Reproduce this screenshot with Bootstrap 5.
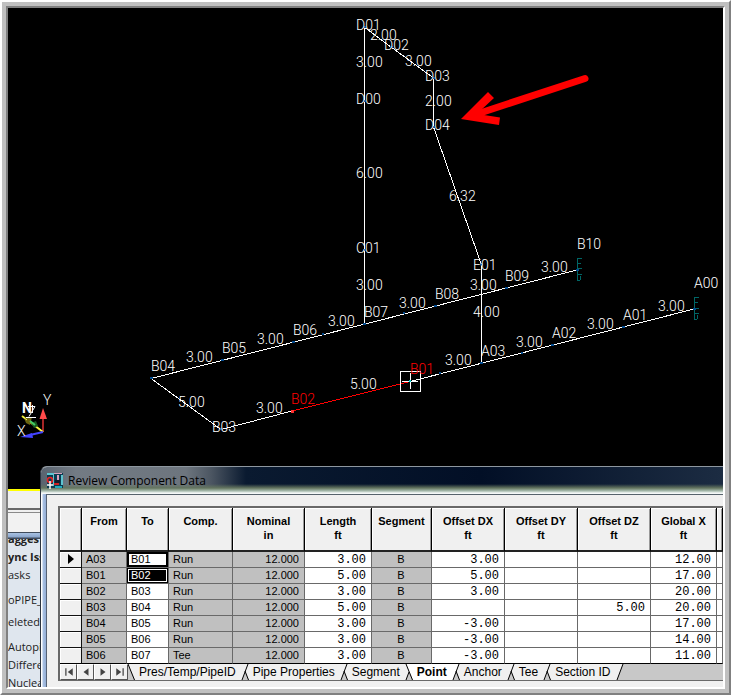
<!DOCTYPE html>
<html lang="en">
<head>
<meta charset="utf-8">
<meta name="viewport" content="width=device-width, initial-scale=1">
<title>Review Component Data</title>
<link href="https://cdn.jsdelivr.net/npm/bootstrap@5.3.0/dist/css/bootstrap.min.css" rel="stylesheet">
<style>
body{font-family:"Liberation Sans",Arial,sans-serif;color:#000;background:#fff}
.bevel-outer{border:2px solid #fff;border-right-color:#808080;border-bottom-color:#808080}
.bevel-mid{border:4px solid #c0c0c0}
.bevel-inner{border:2px solid #808080;border-right-color:#fff;border-bottom-color:#fff}
.scene{background:#000;font-size:14px;font-family:Roboto,"Liberation Sans",sans-serif;font-weight:300}
.scene text{fill:#fff}
.scene .hot{fill:#f00}
.mail{width:34px;font-family:"Open Sans","Noto Sans",sans-serif;font-size:11px;line-height:18px;color:#222;background:#dfe6ee;border-top:2px solid #ff0}
.strip-a{height:17px;background:#f0f0f0}
.strip-b{height:24px;background:#f2f2f2;border-top:2px solid #696969;box-shadow:inset 0 2px #f0f0f0,inset 0 3px #8a8a8a}
.strip-c{height:7px;background:linear-gradient(#404c5c 1px,#a9c2e2 1px,#8ba6cd 5px,#404c5c 6px)}
.mail-cut{height:9px}
.gap-top{margin-top:7px}
.dialog-win{left:32px;background:#f0f0f0;border:1px solid #8e979f;border-left-color:#2c3440;border-right:0;border-bottom:0;border-top-left-radius:7px}
.title-strip{height:27px;background:linear-gradient(to bottom,transparent 17px,#64755f 21px,#a9bdb0 24px,#f4f8f8 26px),linear-gradient(to right,#59636f,#737b84 35px,#6d757e 145px,#4c5662 170px,#0a1a30 205px,#020f26 440px,#1c2c42)}
.title-name{font-family:"Open Sans","Noto Sans",sans-serif;font-size:12px;line-height:27px}
.glass{width:6px;background:linear-gradient(to right,#fff 1px,#a9c1e3 2px,#94aed6 5px,#566274 5px)}
.client{border-top:1px solid #56636c;padding:11px 0 0 11px}
.grid-box{border-left:2px solid #696969;border-top:2px solid #696969}
.grid-sheet{table-layout:fixed;border-collapse:separate;border-spacing:0;font-size:11px;line-height:14px}
.grid-sheet thead th{height:44px;padding:6px 0 0;vertical-align:top;text-align:center;background:#f0f0f0;border-right:1px solid #000;border-bottom:2px solid #222;box-shadow:inset 1px 1px #fff,inset -1px 0 #999}
.grid-sheet td,.grid-sheet tbody th{height:16px;line-height:15px;padding:0 5px 0 4px;border-right:1px solid #696969;border-bottom:1px solid #696969;overflow:hidden;white-space:nowrap;background:#fff}
.grid-sheet tbody th{background:#f0f0f0;padding:0;text-align:center;border-color:#111;box-shadow:inset 1px 1px #fff}
.grid-sheet tbody th svg{margin-top:-2px}
.grid-sheet tbody tr:last-child>*{border-bottom-color:#000}
.grid-sheet .lock{background:#c0c0c0}
.grid-sheet .num{font-family:"Liberation Mono","Courier New",monospace;font-size:12px;text-align:right;padding-top:2px;line-height:13px}
.grid-sheet .current{box-shadow:inset 0 0 0 2px #000}
.grid-sheet .picked{background:#000;color:#fff;box-shadow:inset 0 0 0 1px #000,inset 0 0 0 2px #fff}
.sheet-tabs{height:17px;background:#c8c8c8;border-bottom:1px solid #696969;font-size:12px;line-height:15px}
.sheet-tabs button{border:0;background:#f0f0f0;color:#000;padding:0 5px 0 4px;white-space:nowrap}
.sheet-tabs .step{width:17px;padding:0;border:1px solid #fff;border-right-color:#555;border-bottom-color:#555;line-height:0}
.sheet-tabs .on{background:#fff}
.foot{height:6px}
</style>
<script src="https://cdn.jsdelivr.net/npm/bootstrap@5.3.0/dist/js/bootstrap.bundle.min.js"></script>
</head>
<body>
<div class="bevel-outer vh-100 d-flex"><div class="bevel-mid flex-grow-1 d-flex"><main class="bevel-inner flex-grow-1 d-flex flex-column position-relative overflow-hidden">

<svg class="scene d-block w-100 flex-shrink-0" viewBox="8 8 715 481" role="img" aria-label="Pipe model">
  <g fill="none" stroke="#fff" stroke-width="1" shape-rendering="crispEdges">
    <path d="M364.500 27V324M364 27L391 47L433.500 78V127L481.500 265V363"/>
    <path d="M577 270L151 378.500L221 429.500L292 411M410 381.500L694 309"/>
    <path stroke="#f00" d="M292 411L410 381.500"/>
  </g>
  <g fill="none" stroke="#006666" shape-rendering="crispEdges">
    <path d="M577.500 259V281M577 258.500h5M578 263.500h3M578 268.500h4M578 274.500h4M577 280.500h3M580.500 276v4"/>
    <path d="M694.500 298V320M694 297.500h5M695 302.500h3M695 308.500h4M695 313.500h4M694 319.500h3M697.500 315v4"/>
  </g>
  <path fill="none" stroke="#004a90" stroke-width="2" d="M363 27h3M390 47h3M432 78h3M363 101h3M432 127h3M363 250h3M480 264.500h3M505 288h3M576 270h3M434 306h3M403 313h2M363 324h3M322 334h2M292 342h3M221 360h3M150 378h3M220 429h3M480 363h3M439 373h2M521 353h2M551 345h3M622 327h3M693 309h3"/>
  <g fill="none" stroke="#fff" shape-rendering="crispEdges"><path d="M400.500 371.500h20v20h-20zM410.500 373v16M402 381.500h16"/></g>
  <path fill="#0cc" d="M409 380h2v2h-2z"/><path fill="#f33" d="M291 410h3v3h-3z"/>
  <g>
    <text x="356" y="30">D01</text><text x="370" y="40">2.00</text><text x="384" y="50">D02</text>
    <text x="405" y="66">3.00</text><text x="425" y="81">D03</text><text x="356" y="67">3.00</text>
    <text x="356" y="104">D00</text><text x="425" y="106">2.00</text><text x="425" y="130">D04</text>
    <text x="356" y="178">6.00</text><text x="449" y="201">6.32</text><text x="356" y="253">C01</text>
    <text x="473" y="270">E01</text><text x="356" y="290">3.00</text><text x="470" y="290">3.00</text>
    <text x="505" y="281">B09</text><text x="541" y="272">3.00</text><text x="577" y="249">B10</text>
    <text x="435" y="299">B08</text><text x="399" y="308">3.00</text><text x="473" y="317">4.00</text>
    <text x="364" y="317">B07</text><text x="694" y="288">A00</text><text x="658" y="311">3.00</text>
    <text x="623" y="320">A01</text><text x="587" y="329">3.00</text><text x="552" y="338">A02</text>
    <text x="516" y="347">3.00</text><text x="481" y="356">A03</text><text x="445" y="365">3.00</text>
    <text x="410" y="374" class="hot">B01</text><text x="151" y="371">B04</text><text x="186" y="362">3.00</text>
    <text x="222" y="353">B05</text><text x="257" y="344">3.00</text><text x="293" y="335">B06</text>
    <text x="328" y="326">3.00</text><text x="178" y="407">5.00</text><text x="212" y="432">B03</text>
    <text x="256" y="413">3.00</text><text x="291" y="404" class="hot">B02</text><text x="350" y="389">5.00</text>
  </g>
  <path stroke="#f00" stroke-width="7" stroke-linecap="round" d="M480 113L585 78.500"/>
  <path fill="#f00" d="M461 119L488 92L494 98L480 111L484 115L500 117.500L499 125Z"/>
  <g>
    <path stroke="#d33" stroke-width="1.500" d="M43 418V432"/><path fill="#ff4a4a" d="M43 408L47 419H39.500Z"/>
    <path stroke="#ee3" stroke-width="2" d="M22 416L43 432"/>
    <path fill="#6b6410" d="M24 418L32 417L30 425L26 423Z"/><path fill="#185c20" d="M31 423L36 421L38 426L34 428Z"/>
    <path stroke="#ff5" d="M23 417L27 420M37 427L42 431"/><path stroke="#4c6" stroke-width="2" d="M30 421L35 425"/>
    <path stroke="#44f" stroke-width="2" d="M30 435L43 432"/><path fill="#44f" d="M20 437L32 433L33 438Z"/>
    <text class="fw-bold" x="22" y="413">N</text>
    <path fill="none" stroke="#fff" d="M28 406.500h7L29 416.500M26 417.500h10M32.500 405v8"/>
    <text x="43" y="405">Y</text><text x="17" y="436">X</text>
  </g>
</svg>

<div class="mail flex-grow-1 overflow-hidden text-nowrap">
  <div class="strip-a"></div><div class="strip-b"></div><div class="strip-c"></div>
  <div class="mail-cut d-flex align-items-end overflow-hidden fw-bold">agges</div>
  <div class="fw-bold">ync Iss</div>
  <div>asks</div>
  <div class="gap-top">oPIPE_</div>
  <div class="mt-1">eleted</div>
  <div class="gap-top">Autopi</div>
  <div>Differe</div>
  <div>Nuclea</div>
</div>

<section class="dialog-win position-absolute end-0 bottom-0 overflow-hidden" aria-label="Review Component Data">
  <div class="title-strip d-flex">
    <svg class="ms-1 mt-1 me-1" width="19" height="20" viewBox="0 0 19 20" aria-hidden="true">
      <path fill="#0b3b50" d="M2 2h16v15H2z"/><path fill="#5fc4d0" d="M2 2h7v2H2zM8 4h1v11H8zM16 4h2v10h-2z"/>
      <path fill="#d8a0bc" d="M9 2h8v1H9zM12 4h2v5h-2z"/><path fill="#111a2a" d="M10 9h5v3h-5z"/>
      <circle cx="5" cy="9" r="2.500" fill="none" stroke="#e22" stroke-width="1.500"/><path fill="#c22" d="M9 12h5v2H9z"/>
      <path stroke="#fff" stroke-width="1.500" d="M5 10v8M2 14h6"/><path fill="#2ab" d="M10 15h7v2h-7z"/>
    </svg>
    <span class="title-name">Review Component Data</span>
  </div>
  <div class="d-flex">
    <div class="glass flex-shrink-0"></div>
    <div class="client flex-grow-1">
      <div class="grid-box">
      <table class="grid-sheet w-100">
        <colgroup><col style="width:22px"><col style="width:45px"><col style="width:42px"><col style="width:64px"><col style="width:72px"><col style="width:67px"><col style="width:60px"><col style="width:73px"><col style="width:73px"><col style="width:73px"><col style="width:66px"><col></colgroup>
        <thead><tr><th></th><th>From</th><th>To</th><th>Comp.</th><th>Nominal<br>in</th><th>Length<br>ft</th><th>Segment</th><th>Offset DX<br>ft</th><th>Offset DY<br>ft</th><th>Offset DZ<br>ft</th><th>Global X<br>ft</th><th></th></tr></thead>
        <tbody>
        <tr><th><svg width="6" height="10" viewBox="0 0 6 10" aria-label="Current row"><path d="M0 0L6 5L0 10Z"/></svg></th><td class="lock">A03</td><td class="current">B01</td><td class="lock">Run</td><td class="lock text-end">12.000</td><td class="num">3.00</td><td class="lock text-center">B</td><td class="num">3.00</td><td></td><td></td><td class="num">12.00</td><td></td></tr>
        <tr><th></th><td class="lock">B01</td><td class="picked">B02</td><td class="lock">Run</td><td class="lock text-end">12.000</td><td class="num">5.00</td><td class="lock text-center">B</td><td class="num">5.00</td><td></td><td></td><td class="num">17.00</td><td></td></tr>
        <tr><th></th><td class="lock">B02</td><td>B03</td><td class="lock">Run</td><td class="lock text-end">12.000</td><td class="num">3.00</td><td class="lock text-center">B</td><td class="num">3.00</td><td></td><td></td><td class="num">20.00</td><td></td></tr>
        <tr><th></th><td class="lock">B03</td><td>B04</td><td class="lock">Run</td><td class="lock text-end">12.000</td><td class="num">5.00</td><td class="lock text-center">B</td><td></td><td></td><td class="num">5.00</td><td class="num">20.00</td><td></td></tr>
        <tr><th></th><td class="lock">B04</td><td>B05</td><td class="lock">Run</td><td class="lock text-end">12.000</td><td class="num">3.00</td><td class="lock text-center">B</td><td class="num">-3.00</td><td></td><td></td><td class="num">17.00</td><td></td></tr>
        <tr><th></th><td class="lock">B05</td><td>B06</td><td class="lock">Run</td><td class="lock text-end">12.000</td><td class="num">3.00</td><td class="lock text-center">B</td><td class="num">-3.00</td><td></td><td></td><td class="num">14.00</td><td></td></tr>
        <tr><th></th><td class="lock">B06</td><td>B07</td><td class="lock">Tee</td><td class="lock text-end">12.000</td><td class="num">3.00</td><td class="lock text-center">B</td><td class="num">-3.00</td><td></td><td></td><td class="num">11.00</td><td></td></tr>
        </tbody>
      </table>
      <div class="sheet-tabs d-flex">
        <button class="step" aria-label="First"><svg width="10" height="10" viewBox="0 0 8 8"><path fill="#444" d="M1 1h1v6H1zM7 1v6L3 4z"/></svg></button>
        <button class="step" aria-label="Previous"><svg width="10" height="10" viewBox="0 0 8 8"><path fill="#444" d="M6 1v6L2 4z"/></svg></button>
        <button class="step" aria-label="Next"><svg width="10" height="10" viewBox="0 0 8 8"><path fill="#444" d="M2 1v6L6 4z"/></svg></button>
        <button class="step" aria-label="Last"><svg width="10" height="10" viewBox="0 0 8 8"><path fill="#444" d="M6 1h1v6H6zM1 1v6L5 4z"/></svg></button>
        <svg class="flex-shrink-0" width="7" height="16"><path fill="#f0f0f0" d="M0 0H8V16H7z"/><path stroke="#000" d="M0 0L6.500 16"/></svg>
        <button>Pres/Temp/PipeID</button>
        <svg class="flex-shrink-0" width="8" height="16"><path fill="#f0f0f0" d="M0 0H8V16L4 7L1 16H0z"/><path fill="none" stroke="#000" d="M1 16L7 0M4 7L7.500 16"/></svg>
        <button>Pipe Properties</button>
        <svg class="flex-shrink-0" width="8" height="16"><path fill="#f0f0f0" d="M0 0H8V16L4 7L1 16H0z"/><path fill="none" stroke="#000" d="M1 16L7 0M4 7L7.500 16"/></svg>
        <button>Segment</button>
        <svg class="flex-shrink-0" width="8" height="16"><path fill="#f0f0f0" d="M0 0H1L4 8L1 16H0z"/><path fill="#fff" d="M1 0H8V16z"/><path fill="none" stroke="#000" d="M1 0L7.500 16M4 8L1 16"/></svg>
        <button class="on fw-bold">Point</button>
        <svg class="flex-shrink-0" width="8" height="16"><path fill="#f0f0f0" d="M7 0H8V16L4 7z"/><path fill="#fff" d="M0 0H7L1 16H0z"/><path fill="none" stroke="#000" d="M1 16L7 0M4 7L7.500 16"/></svg>
        <button>Anchor</button>
        <svg class="flex-shrink-0" width="8" height="16"><path fill="#f0f0f0" d="M0 0H8V16L4 7L1 16H0z"/><path fill="none" stroke="#000" d="M1 16L7 0M4 7L7.500 16"/></svg>
        <button>Tee</button>
        <svg class="flex-shrink-0" width="8" height="16"><path fill="#f0f0f0" d="M0 0H8V16L4 7L1 16H0z"/><path fill="none" stroke="#000" d="M1 16L7 0M4 7L7.500 16"/></svg>
        <button>Section ID</button>
        <svg class="flex-shrink-0" width="8" height="16"><path fill="#f0f0f0" d="M0 0H7L1 16H0z"/><path stroke="#000" d="M1 16L7 0"/></svg>
      </div>
      </div>
      <div class="foot"></div>
    </div>
  </div>
</section>
</main></div></div>
</body>
</html>
